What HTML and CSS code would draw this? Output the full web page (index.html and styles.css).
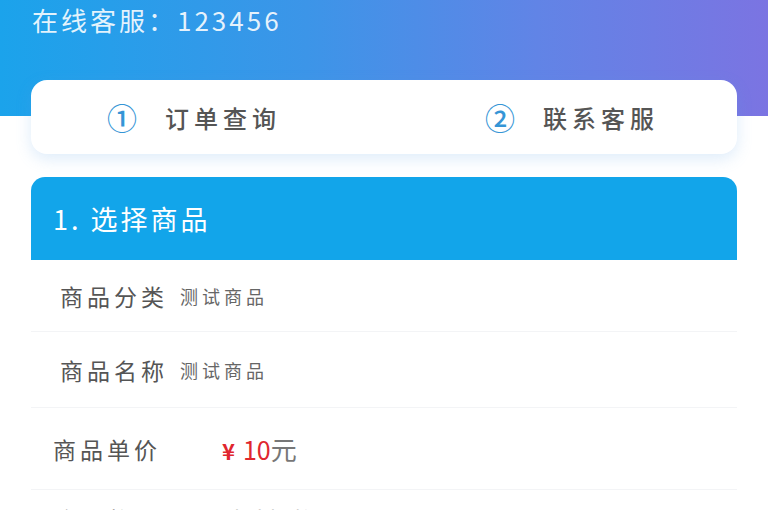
FILE: index.html
```html
<!DOCTYPE html>
<html lang="zh">
<head>
<meta charset="utf-8">
<link rel="stylesheet" href="styles.css">
</head>
<body>
<div class="page">
  <div class="service">在线客服：123456</div>
  <div class="tabs">
    <div class="tab"><span class="num">①</span><span class="tab-label">订单查询</span></div>
    <div class="tab"><span class="num">②</span><span class="tab-label">联系客服</span></div>
  </div>
  <div class="section">
    <div class="section-head">1. 选择商品</div>
    <div class="row row-1"><span class="label">商品分类</span><span class="value">测试商品</span></div>
    <div class="row row-2"><span class="label">商品名称</span><span class="value">测试商品</span></div>
    <div class="row row-3"><span class="label label-fixed">商品单价</span><span class="price"><span class="yen">¥</span>10<span class="unit">元</span></span></div>
    <div class="row row-4"><span class="label label-fixed">购买数量</span><span class="value-lg">请选择数量</span></div>
  </div>
</div>
</body>
</html>
```
FILE: styles.css
```css
html, body {
  margin: 0;
  padding: 0;
  background: #ffffff;
}
body {
  font-family: "Noto Sans CJK SC", "Noto Sans", sans-serif;
  width: 768px;
  height: 510px;
  overflow: hidden;
}
.page {
  background: linear-gradient(90deg, #1ba3eb 0%, #3c95e8 40%, #6184e6 70%, #7b74e2 100%) top left / 100% 116px no-repeat, #ffffff;
  min-height: 510px;
}
.service {
  height: 40px;
  line-height: 40px;
  padding-left: 32px;
  font-size: 26px;
  letter-spacing: 3px;
  color: rgba(255, 255, 255, 0.88);
}
.tabs {
  margin: 40px 31px 0;
  height: 74px;
  background: #ffffff;
  border-radius: 16px;
  box-shadow: 0 5px 16px rgba(90, 160, 230, 0.2);
  display: flex;
  align-items: center;
  justify-content: space-between;
  padding: 0 78px 0 76px;
}
.tab {
  display: flex;
  align-items: center;
  gap: 28px;
}
.num {
  font-size: 30px;
  line-height: 1;
  color: #3595d6;
  font-weight: 500;
}
.tab-label {
  font-size: 24px;
  letter-spacing: 5px;
  color: #555555;
  font-weight: 500;
}
.section {
  margin: 23px 31px 0;
}
.section-head {
  height: 83px;
  background: #12a5ea;
  border-radius: 14px 14px 0 0;
  display: flex;
  align-items: center;
  padding-left: 22px;
  color: #ffffff;
  font-size: 27px;
  letter-spacing: 3px;
}
.row {
  display: flex;
  align-items: center;
  border-bottom: 1px solid #f3f4f6;
  padding-left: 29px;
}
.row-1 { height: 71px; }
.row-2 { height: 75px; }
.row-3 { height: 81px; padding-left: 22px; }
.row-4 { height: 50px; padding-left: 22px; border-bottom: none; padding-top: 12px; align-items: flex-start; }
.label {
  font-size: 23px;
  letter-spacing: 4px;
  color: #555555;
}
.label-fixed {
  width: 169px;
}
.value {
  margin-left: 12px;
  font-size: 18px;
  letter-spacing: 4px;
  color: #666666;
}
.value-lg {
  font-size: 23px;
  color: #aaaaaa;
}
.price {
  font-size: 25px;
  color: #e0262e;
}
.yen {
  font-size: 22px;
  font-weight: 700;
  margin-right: 8px;
}
.unit {
  color: #777777;
  font-size: 26px;
}
```
